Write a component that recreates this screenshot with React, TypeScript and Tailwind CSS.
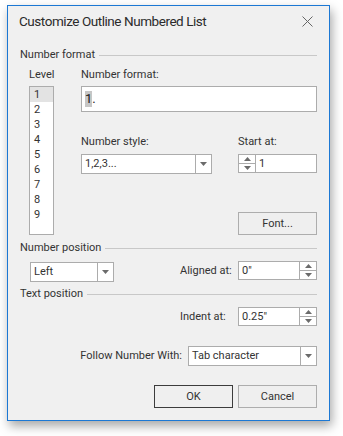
import React from 'react'

const font = { fontFamily: 'Roboto, "Open Sans", sans-serif' }

const Arrow = ({ up }: { up?: boolean }) => (
    <svg width="7" height="4" viewBox="0 0 7 4" className="block">
        {up
            ? <polygon points="0,4 7,4 3.5,0" fill="#6b6b6b" />
            : <polygon points="0,0 7,0 3.5,4" fill="#6b6b6b" />}
    </svg>
)

const SectionHeader = ({ label }: { label: string }) => (
    <div className="flex items-center h-4 gap-[4px]">
        <span className="whitespace-nowrap leading-4">{label}</span>
        <div className="flex-1 h-px bg-[#c8c8c8]" />
    </div>
)

const Combo = ({ value, width }: { value: string; width: string }) => (
    <div className={`${width} h-[20px] flex bg-white border border-[#acacac]`}>
        <div className="flex-1 flex items-center pl-[3px] leading-4 whitespace-nowrap overflow-hidden">{value}</div>
        <div className="w-[16px] border-l border-[#acacac] flex items-center justify-center">
            <Arrow />
        </div>
    </div>
)

const Spinner = () => (
    <div className="w-[16px] flex flex-col">
        <div className="flex-1 flex items-center justify-center border-b border-[#acacac]"><Arrow up /></div>
        <div className="flex-1 flex items-center justify-center"><Arrow /></div>
    </div>
)

const SpinEdit = ({ value, left }: { value: string; left?: boolean }) => (
    <div className="w-[79px] h-[19px] flex bg-white border border-[#acacac]">
        {left && <div className="flex border-r border-[#acacac]"><Spinner /></div>}
        <div className="flex-1 flex items-center pl-[3px] leading-4">{value}</div>
        {!left && <div className="flex border-l border-[#acacac]"><Spinner /></div>}
    </div>
)

export default function App() {
    const levels = ['1', '2', '3', '4', '5', '6', '7', '8', '9']

    return (
        <div className="w-[343px] h-[436px] bg-white pt-[5px] pl-[7px]" style={font}>
            <div className="w-[323px] h-[416px] bg-[#f0f0f0] border border-[#1c78d4] shadow-[2px_5px_10px_rgba(0,0,0,0.35)] flex flex-col text-[11px] text-[#333333]">
                {/* title bar */}
                <div className="h-[30px] flex items-center justify-between pl-[11px] pr-[16px]">
                    <span className="text-[13.5px] tracking-[-0.45px] text-[#2b2b2b] leading-5">Customize Outline Numbered List</span>
                    <svg width="11" height="11" viewBox="0 0 11 11">
                        <path d="M0.5 0.5 L10.5 10.5 M10.5 0.5 L0.5 10.5" stroke="#666" strokeWidth="1" />
                    </svg>
                </div>

                <div className="flex flex-col px-[12px]">
                    <div className="mt-[11px]">
                        <SectionHeader label="Number format" />
                    </div>

                    <div className="flex mt-[4px]">
                        {/* level list */}
                        <div className="w-[49px] flex flex-col items-start pl-[9px]">
                            <div className="h-4 leading-4">Level</div>
                            <div className="mt-[3px] w-[25px] h-[149px] bg-white border border-[#acacac] flex flex-col">
                                {levels.map((l, i) => (
                                    <div key={l} className={`h-[15px] leading-[15px] pl-[4px] ${i === 0 ? 'bg-[#e3e3e3]' : ''}`}>{l}</div>
                                ))}
                            </div>
                        </div>

                        <div className="flex-1 flex flex-col pl-[12px]">
                            <div className="h-4 leading-4">Number format:</div>
                            <div className="mt-[3px] h-[26px] bg-white border border-[#acacac] flex items-center pl-[3px] text-[13px] text-[#1a1a1a]">
                                <span className="bg-[#c6c6c6] leading-4">1</span><span className="leading-4">.</span>
                            </div>

                            <div className="flex justify-between mt-[22px]">
                                <div className="flex flex-col">
                                    <div className="h-4 leading-4">Number style:</div>
                                    <div className="mt-[4px]"><Combo value="1,2,3..." width="w-[131px]" /></div>
                                </div>
                                <div className="flex flex-col">
                                    <div className="h-4 leading-4">Start at:</div>
                                    <div className="mt-[4px]"><SpinEdit value="1" left /></div>
                                </div>
                            </div>

                            <div className="flex justify-end mt-[38px]">
                                <button className="w-[79px] h-[23px] border border-[#adadad] bg-[#efefef] leading-4">Font...</button>
                            </div>
                        </div>
                    </div>

                    <div className="mt-[5px]">
                        <SectionHeader label="Number position" />
                    </div>
                    <div className="flex items-start mt-[5px] pl-[10px]">
                        <div className="mt-[1px]"><Combo value="Left" width="w-[84px]" /></div>
                        <div className="flex-1" />
                        <div className="w-[58px] h-[19px] flex items-center leading-4">Aligned at:</div>
                        <SpinEdit value={'0"'} />
                    </div>

                    <div className="mt-[4px]">
                        <SectionHeader label="Text position" />
                    </div>
                    <div className="flex justify-end items-center mt-[5px]">
                        <div className="w-[58px] leading-4">Indent at:</div>
                        <SpinEdit value={'0.25"'} />
                    </div>

                    <div className="flex justify-end items-center mt-[20px]">
                        <div className="mr-[6px] leading-4">Follow Number With:</div>
                        <Combo value="Tab character" width="w-[129px]" />
                    </div>

                    <div className="flex justify-end gap-[5px] mt-[19px]">
                        <button className="w-[79px] h-[23px] border border-[#3c3c3c] bg-[#efefef] leading-4">OK</button>
                        <button className="w-[79px] h-[23px] border border-[#adadad] bg-[#efefef] leading-4">Cancel</button>
                    </div>
                </div>
            </div>
        </div>
    )
}
